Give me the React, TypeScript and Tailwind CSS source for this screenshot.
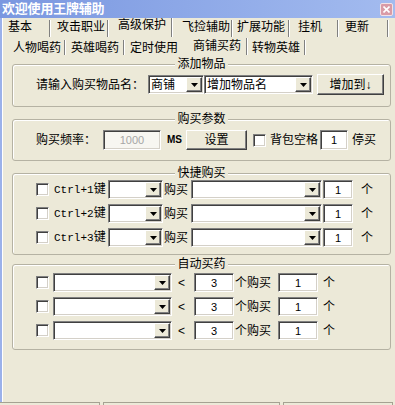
import React from "react";

const sunken =
  "bg-white border border-t-[#808080] border-l-[#808080] border-r-white border-b-white shadow-[inset_1px_1px_0_#404040,inset_-1px_-1px_0_#d4d0c8]";
const raised =
  "bg-[#ece9d8] border border-t-white border-l-white border-r-[#404040] border-b-[#404040] shadow-[inset_-1px_-1px_0_#808080]";

function Arrow() {
  return (
    <svg width="7" height="4" viewBox="0 0 7 4">
      <path d="M0 0h7L3.5 4z" fill="#000" />
    </svg>
  );
}

function Combo({ className, text }: { className: string; text?: string }) {
  return (
    <div className={`${sunken} ${className} flex items-center justify-between pl-[2px] pr-[1px]`}>
      <span className="leading-[14px] whitespace-nowrap">{text}</span>
      <div className={`${raised} w-[16px] h-[15px] flex items-center justify-center shrink-0`}>
        <Arrow />
      </div>
    </div>
  );
}

function Edit({ className, text }: { className: string; text: string }) {
  return (
    <div className={`${sunken} ${className} flex items-center justify-center text-[11px] leading-[12px]`}>
      {text}
    </div>
  );
}

function Check({ className = "" }: { className?: string }) {
  return <div className={`${sunken} w-[13px] h-[13px] shrink-0 ${className}`} />;
}

function Group({
  title,
  className,
  children,
}: {
  title: string;
  className: string;
  children: React.ReactNode;
}) {
  return (
    <div className={`border border-[#b5b2a3] rounded-[3px] shadow-[inset_1px_1px_0_#fff] ${className}`}>
      <div className="flex justify-center -mt-[8px] h-[14px]">
        <span className="bg-[#ece9d8] px-[2px] leading-[14px]">{title}</span>
      </div>
      {children}
    </div>
  );
}

const topTabs = [
  { label: "基本", cls: "w-[47px] pl-[5px]" },
  { label: "攻击职业", cls: "w-[58px] pl-[7px]" },
  { label: "高级保护", cls: "w-[64px] pl-[10px]", selected: true },
  { label: "飞捡辅助", cls: "w-[60px] pl-[10px]" },
  { label: "扩展功能", cls: "w-[57px] pl-[5px]" },
  { label: "挂机", cls: "w-[49px] pl-[9px]" },
  { label: "更新", cls: "w-[50px] pl-[7px]" },
];

const subTabs = [
  { label: "人物喝药", cls: "w-[62px] pl-[10px]" },
  { label: "英雄喝药", cls: "w-[59px] pl-[6px]" },
  { label: "定时使用", cls: "w-[59px] pl-[6px]", noSep: true },
  { label: "商铺买药", cls: "w-[64px] pl-[10px]", selected: true },
  { label: "转物英雄", cls: "w-[58px] pl-[5px]" },
];

export default function App() {
  return (
    <div className="w-[395px] h-[405px] bg-[#ece9d8] overflow-hidden flex flex-col text-[12px] text-black font-['Liberation_Sans','Noto_Sans_CJK_SC',sans-serif]">
      {/* title bar */}
      <div className="h-[18px] shrink-0 flex items-center justify-between pl-[2px] pr-[2px] bg-linear-to-r from-[#7a97e0] to-[#a3bbef]">
        <span className="text-white font-bold text-[13px] leading-[14px] tracking-[-0.2px]">欢迎使用王牌辅助</span>
        <div className="w-[13px] h-[13px] rounded-[2px] border border-[#f3e2e6] bg-[#d99ba6] flex items-center justify-center">
          <svg width="7" height="7" viewBox="0 0 7 7">
            <path d="M0.5 0.5l6 6M6.5 0.5l-6 6" stroke="#fff" strokeWidth="1.6" />
          </svg>
        </div>
      </div>

      <div className="flex flex-1 min-h-0">
        <div className="w-[2px] bg-[#9bb1ea]" />
        <div className="w-[1px] bg-white" />
        <div className="flex-1 flex flex-col">
          {/* outer tabs */}
          <div className="flex h-[19px] shrink-0">
            {topTabs.map((t) => (
              <div key={t.label} className={`${t.cls} h-full`}>
                <div
                  className={
                    t.selected
                      ? "h-[19px] border-r border-[#808080] shadow-[1px_0_0_#fff] leading-[14px]"
                      : "mt-[2px] h-[17px] border-r border-[#808080] shadow-[1px_0_0_#fff] leading-[14px]"
                  }
                >
                  {t.label}
                </div>
              </div>
            ))}
          </div>

          {/* inner tabs */}
          <div className="flex h-[18px] shrink-0">
            {subTabs.map((t) => (
              <div key={t.label} className={`${t.cls} h-full`}>
                <div
                  className={
                    t.selected
                      ? "mt-[1px] h-[17px] border-r border-[#808080] shadow-[1px_0_0_#fff] leading-[14px] pt-[1px]"
                      : t.noSep
                        ? "mt-[3px] h-[15px] leading-[14px] pt-[1px]"
                        : "mt-[3px] h-[15px] border-r border-[#808080] shadow-[1px_0_0_#fff] leading-[14px] pt-[1px]"
                  }
                >
                  {t.label}
                </div>
              </div>
            ))}
          </div>

          <div className="ml-[9px] w-[379px] flex flex-col">
            <Group title="添加物品" className="mt-[9px] h-[43px]">
              <div className="mt-[3px] h-[21px] flex items-center pl-[23px]">
                <span className="w-[112px] leading-[14px]">请输入购买物品名：</span>
                <Combo className="w-[56px] h-[19px]" text="商铺" />
                <Combo className="w-[109px] h-[19px]" text="增加物品名" />
                <button className={`${raised} ml-[4px] w-[67px] h-[21px] leading-[14px]`}>增加到↓</button>
              </div>
            </Group>

            <Group title="购买参数" className="mt-[12px] h-[42px]">
              <div className="mt-[4px] h-[20px] flex items-center pl-[23px]">
                <span className="w-[67px] leading-[14px]">购买频率：</span>
                <div className="w-[58px] h-[20px] border border-t-[#808080] border-l-[#808080] border-r-white border-b-white shadow-[inset_1px_1px_0_#404040,inset_-1px_-1px_0_#d4d0c8] bg-[#f7f6f1] flex items-center justify-center text-[11px] text-[#a6a6a6]">
                  1000
                </div>
                <span className="w-[25px] pl-[6px] text-[10px] font-bold leading-[12px]">MS</span>
                <button className={`${raised} w-[61px] h-[20px] leading-[14px]`}>设置</button>
                <Check className="ml-[6px]" />
                <span className="ml-[4px] w-[50px] leading-[14px]">背包空格</span>
                <Edit className="w-[28px] h-[20px]" text="1" />
                <span className="ml-[4px] leading-[14px]">停买</span>
              </div>
            </Group>

            <Group title="快捷购买" className="mt-[12px] h-[82px]">
              <div className="flex flex-col gap-[5px]">
                {["1", "2", "3"].map((n) => (
                  <div key={n} className="h-[19px] flex items-center pl-[23px]">
                    <Check />
                    <span className="ml-[5px] w-[54px] leading-[14px] whitespace-nowrap">
                      <span className="font-['Liberation_Mono',monospace] text-[11px]">Ctrl+{n}</span>键
                    </span>
                    <Combo className="w-[55px] h-[19px]" />
                    <span className="w-[28px] pl-[1px] leading-[14px]">购买</span>
                    <Combo className="w-[131px] h-[19px]" />
                    <Edit className="ml-[1px] w-[30px] h-[19px]" text="1" />
                    <span className="ml-[8px] leading-[14px]">个</span>
                  </div>
                ))}
              </div>
            </Group>

            <Group title="自动买药" className="mt-[9px] h-[86px]">
              <div className="mt-[2px] flex flex-col gap-[5px]">
                {["a", "b", "c"].map((k) => (
                  <div key={k} className="h-[19px] flex items-center pl-[23px]">
                    <Check />
                    <Combo className="ml-[4px] w-[119px] h-[19px]" />
                    <span className="w-[22px] pl-[6px] leading-[14px]">&lt;</span>
                    <Edit className="w-[40px] h-[19px]" text="3" />
                    <span className="w-[44px] pl-[1px] leading-[14px]">个购买</span>
                    <Edit className="w-[40px] h-[19px]" text="1" />
                    <span className="ml-[5px] leading-[14px]">个</span>
                  </div>
                ))}
              </div>
            </Group>
          </div>
        </div>
      </div>

      {/* status bar */}
      <div className="h-[3px] shrink-0 flex">
        <div className="w-[100px] border-t border-r border-[#a5a292]" />
        <div className="ml-[3px] w-[177px] border-t border-x border-[#a5a292]" />
        <div className="ml-[3px] w-[110px] border-t border-x border-[#a5a292]" />
      </div>
    </div>
  );
}
